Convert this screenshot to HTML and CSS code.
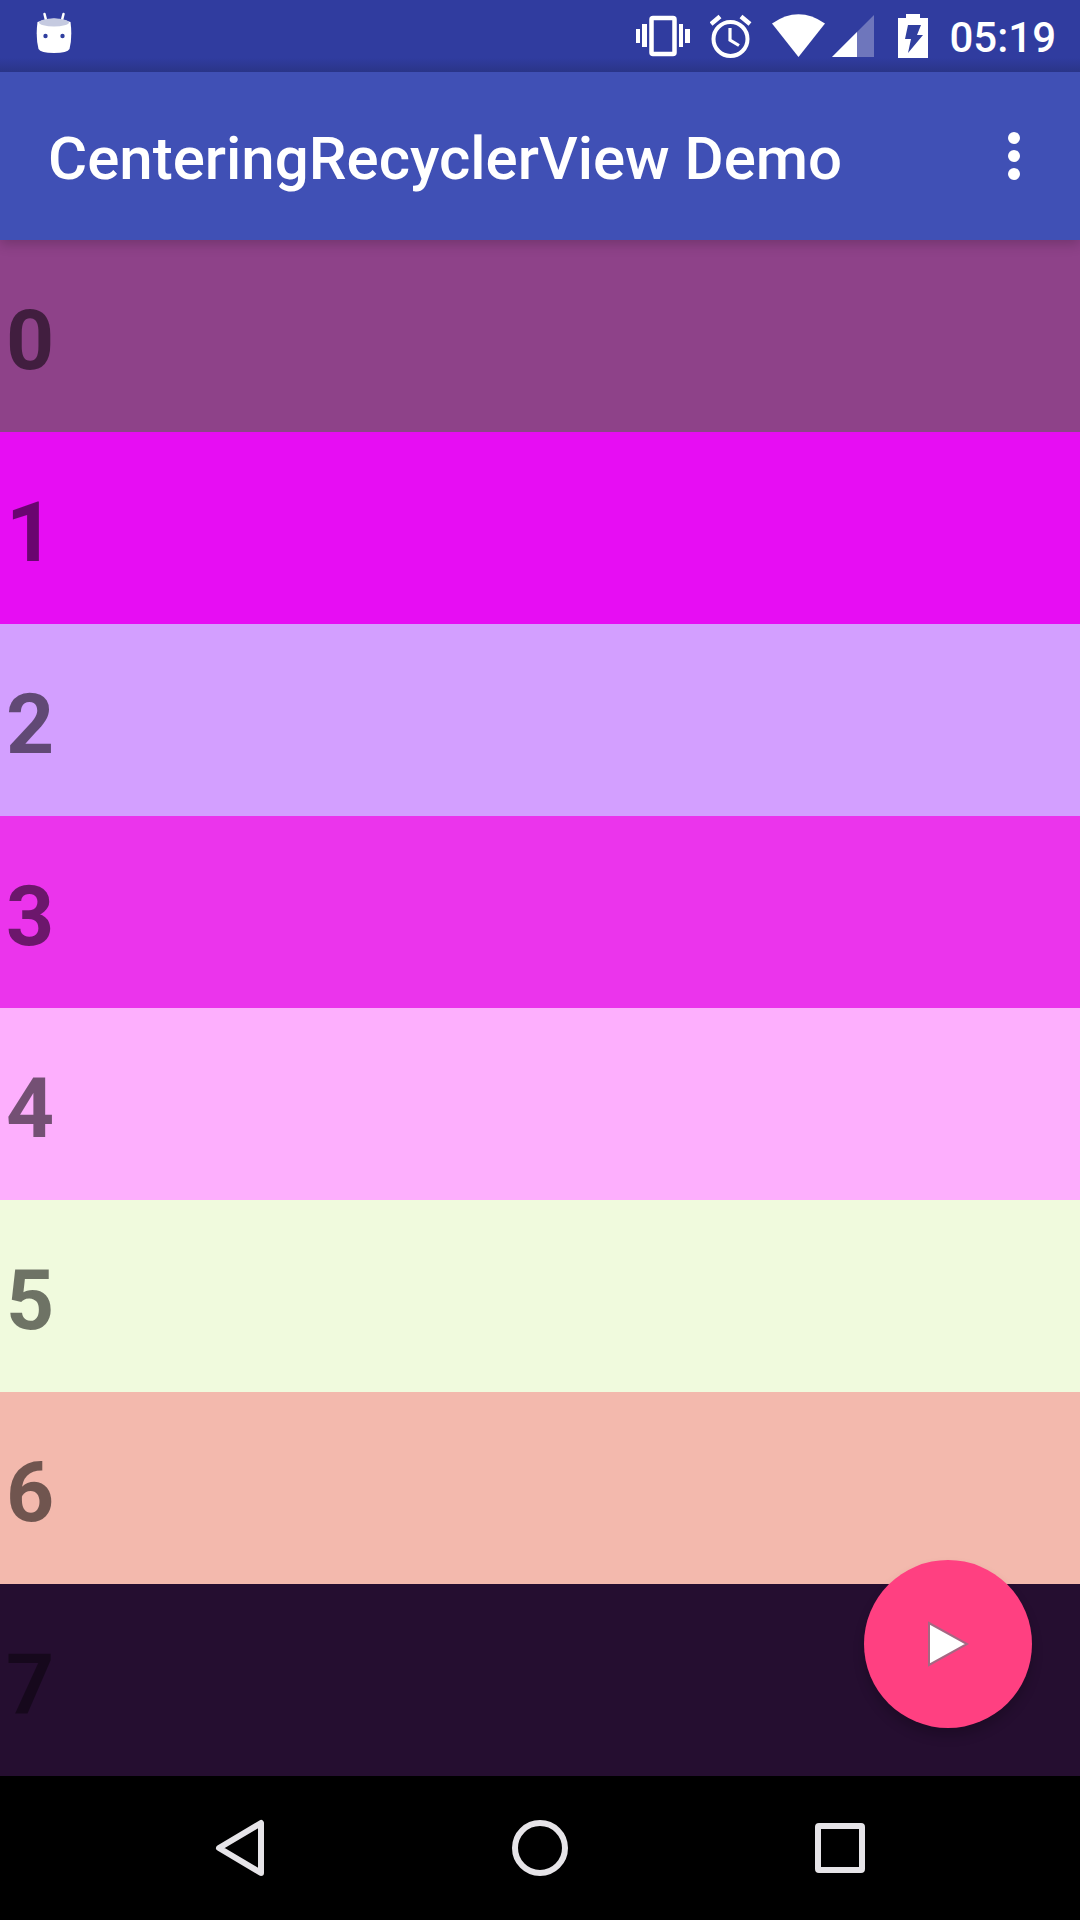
FILE: index.html
```html
<!DOCTYPE html>
<html lang="en">
<head>
<meta charset="utf-8">
<meta name="viewport" content="width=device-width, initial-scale=1">
<title>CenteringRecyclerView Demo</title>
<link rel="stylesheet" href="styles.css">
</head>
<body>
<div class="screen">
  <div class="status-bar">
    <svg class="notification" width="36" height="42" viewBox="36 12 36 42" aria-hidden="true">
      <path d="M44.500 14l2 8M63.500 14l-2 8" stroke="#fff" stroke-width="2.500" stroke-linecap="round"/>
      <path d="M37.500 22q16.500-7 33 0q2 15-1 27q-2 4-15.500 4t-15.500-4q-3-12-1-27z" fill="#fff"/>
      <ellipse cx="54" cy="22.500" rx="15" ry="4" fill="#c5cae0"/>
      <circle cx="45.500" cy="36" r="2.200" fill="#303f9f"/>
      <circle cx="62.500" cy="36" r="2.200" fill="#303f9f"/>
    </svg>
    <div class="status-icons">
      <svg width="54" height="44" viewBox="636 14 54 44" aria-hidden="true">
        <path fill="#fff" d="M636 29h4v14h-4zM642 24h5v23h-5zM679 24h4v23h-4zM685 29h5v14h-5z"/>
        <rect x="651.500" y="18" width="23" height="36" rx="1.500" fill="none" stroke="#fff" stroke-width="4.500"/>
      </svg>
      <svg class="alarm" width="42" height="44" viewBox="711 14 42 44" aria-hidden="true">
        <g fill="none" stroke="#fff">
          <circle cx="731.500" cy="39" r="17" stroke-width="4"/>
          <path d="M731 28v12l9 5.500" stroke-width="3.200"/>
          <path d="M712 24l9-7.500M751 24l-9-7.500" stroke-width="4.500"/>
        </g>
      </svg>
      <svg class="wifi" width="54" height="44" viewBox="773 14 54 44" aria-hidden="true">
        <path fill="#fff" d="M773 23.500Q799.500 5 826 23.500L799.500 57z"/>
      </svg>
      <svg class="signal" width="42" height="44" viewBox="832 14 42 44" aria-hidden="true">
        <path fill="#fff" fill-opacity=".3" d="M874 15v42h-42z"/>
        <path fill="#fff" d="M857 32v25h-25z"/>
      </svg>
      <svg class="battery" width="30" height="44" viewBox="898 14 30 44" aria-hidden="true">
        <path fill="#fff" d="M906 14h14v4h8v40h-30V18h8z"/>
        <path fill="#303f9f" d="M908 25h13l-4 10h6l-15 18 3-14h-6z"/>
      </svg>
      <time class="clock">05:19</time>
    </div>
  </div>

  <header class="app-bar">
    <h1 class="title">CenteringRecyclerView Demo</h1>
    <button class="menu" type="button" aria-label="More options">
      <svg width="12" height="48" viewBox="0 0 12 48" fill="#fff" aria-hidden="true">
        <circle cx="6" cy="6" r="6"/><circle cx="6" cy="24" r="6"/><circle cx="6" cy="42" r="6"/>
      </svg>
    </button>
  </header>

  <main class="content">
    <ol class="list">
      <li class="row plum">0</li>
      <li class="row magenta">1</li>
      <li class="row lavender">2</li>
      <li class="row fuchsia">3</li>
      <li class="row pink">4</li>
      <li class="row mint">5</li>
      <li class="row salmon">6</li>
      <li class="row night">7</li>
    </ol>
    <button class="fab" type="button" aria-label="Play">
      <svg width="48" height="48" viewBox="0 0 48 48" aria-hidden="true">
        <path d="M5 3v42l38-21z" fill="#fff" stroke="#a66783" stroke-width="2"/>
      </svg>
    </button>
  </main>

  <nav class="nav-bar" aria-label="System">
    <button class="nav-button" type="button" aria-label="Back">
      <svg width="60" height="60" viewBox="0 0 60 60" aria-hidden="true"><path d="M51 5v50L9 30z"/></svg>
    </button>
    <button class="nav-button" type="button" aria-label="Home">
      <svg width="60" height="60" viewBox="0 0 60 60" aria-hidden="true"><circle cx="30" cy="30" r="25"/></svg>
    </button>
    <button class="nav-button" type="button" aria-label="Recent apps">
      <svg width="60" height="60" viewBox="0 0 60 60" aria-hidden="true"><rect x="8" y="8" width="44" height="44" rx="1"/></svg>
    </button>
  </nav>
</div>
</body>
</html>
```

FILE: styles.css
```css
* {
  box-sizing: border-box;
}

body {
  margin: 0;
  background: #000;
  font-family: Roboto, "Noto Sans", sans-serif;
}

svg {
  display: block;
  flex: none;
}

button {
  display: flex;
  align-items: center;
  justify-content: center;
  padding: 0;
  border: 0;
  background: none;
  cursor: pointer;
}

.screen {
  display: flex;
  flex-direction: column;
  min-height: 100vh;
}

.status-bar {
  display: flex;
  align-items: center;
  justify-content: space-between;
  height: 72px;
  padding: 0 24px 0 36px;
  background: linear-gradient(#303c9f 58px, #2a3588 72px);
}

.notification {
  margin-bottom: 6px;
}

.status-icons {
  display: flex;
  align-items: center;
  color: #fff;
}

.alarm,
.wifi {
  margin-left: 20px;
}

.signal {
  margin-left: 6px;
}

.battery {
  margin-left: 24px;
}

.clock {
  padding-top: 4px;
  margin-left: 21px;
  font-size: 42px;
  font-weight: 500;
  line-height: 68px;
}

.app-bar {
  position: relative;
  z-index: 1;
  display: flex;
  align-items: center;
  justify-content: space-between;
  height: 168px;
  padding: 0 30px 0 48px;
  background: #4050b5;
  box-shadow: 0 4px 12px rgba(0, 0, 0, 0.2);
  clip-path: inset(0 0 -24px 0);
}

.title {
  margin: 0;
  padding-top: 5px;
  color: #fff;
  font-size: 60px;
  font-weight: 500;
  line-height: 72px;
}

.menu {
  width: 72px;
  height: 96px;
}

.content {
  position: relative;
  flex: 1;
  display: flex;
}

.list {
  flex: 1;
  display: flex;
  flex-direction: column;
  margin: 0;
  padding: 0;
  list-style: none;
}

.row {
  flex: 1;
  display: flex;
  align-items: center;
  min-height: 192px;
  padding: 10px 6px 0;
  color: rgba(0, 0, 0, 0.54);
  font-size: 84px;
  font-weight: 700;
  line-height: 96px;
}

.plum { background: #8e4289; }
.magenta { background: #e70df3; }
.lavender { background: #d39fff; }
.fuchsia { background: #eb34ec; }
.pink { background: #fdaffd; }
.mint { background: #f0fadd; }
.salmon { background: #f3b9ad; }

.night {
  background: #250e30;
  color: rgba(0, 0, 0, 0.4);
}

.fab {
  position: absolute;
  right: 48px;
  bottom: 48px;
  width: 168px;
  height: 168px;
  border-radius: 50%;
  background: #ff4081;
  box-shadow: 0 8px 12px rgba(0, 0, 0, 0.2);
}

.nav-bar {
  display: flex;
  justify-content: center;
  height: 144px;
  background: #000;
}

.nav-button {
  width: 300px;
  fill: none;
  stroke: #e6e4e8;
  stroke-width: 6px;
  stroke-linejoin: round;
}
```
